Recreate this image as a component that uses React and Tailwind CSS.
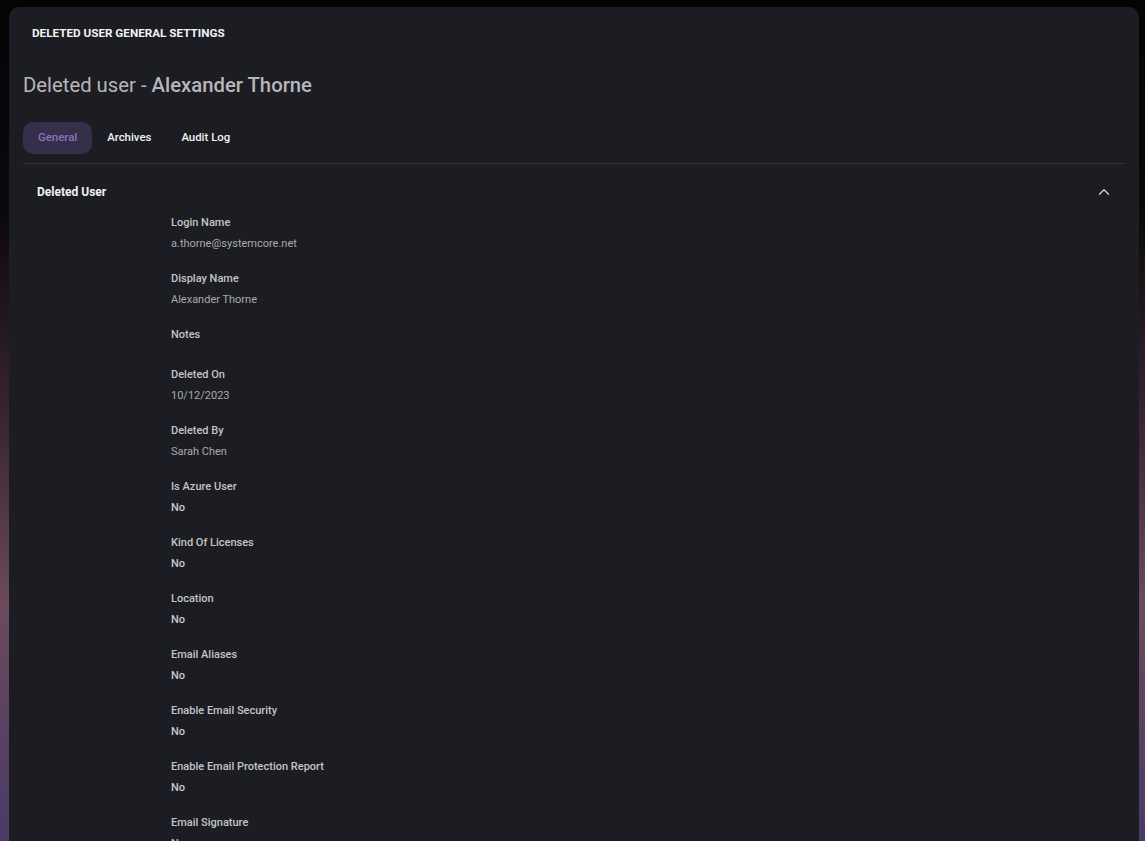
import { ChevronUp } from "lucide-react";

const fields = [
  { label: "Login Name", value: "a.thorne@systemcore.net" },
  { label: "Display Name", value: "Alexander Thorne" },
  { label: "Notes", value: "" },
  { label: "Deleted On", value: "10/12/2023" },
  { label: "Deleted By", value: "Sarah Chen" },
  { label: "Is Azure User", value: "No", strong: true },
  { label: "Kind Of Licenses", value: "No", strong: true },
  { label: "Location", value: "No", strong: true },
  { label: "Email Aliases", value: "No", strong: true },
  { label: "Enable Email Security", value: "No", strong: true },
  { label: "Enable Email Protection Report", value: "No", strong: true },
  { label: "Email Signature", value: "No", strong: true },
];

function Field({ label, value, strong }) {
  return (
    <div className="flex flex-col pb-[19px]">
      <div className="h-4 leading-4 text-[11px] font-medium text-[#c4c4c8]">{label}</div>
      <div
        className={`mt-[5px] leading-4 text-[11px] ${
          strong ? "h-4 font-medium text-[#c8c8cc]" : value ? "h-4 text-[#a9a9ae]" : ""
        }`}
      >
        {value}
      </div>
    </div>
  );
}

export default function App() {
  const tabs = ["General", "Archives", "Audit Log"];
  return (
    <div
      className="h-[841px] overflow-hidden pl-[9px] pr-[6px] pt-[7px] bg-[linear-gradient(180deg,#040405_0%,#0b080b_25%,#3a2531_50%,#6b4a5c_72%,#4a3a68_100%)]"
      style={{ fontFamily: "Roboto, 'Liberation Sans', sans-serif" }}
    >
      <div className="h-[900px] w-[1130px] rounded-t-[10px] bg-[#1c1d22] px-[14px]">
        <div className="pt-[18px] pl-[9px] h-[39px] leading-4 text-[11.7px] font-bold text-[#f2f2f4]">
          DELETED USER GENERAL SETTINGS
        </div>
        <h1 className="mt-[25px] h-[28px] leading-[28px] text-[20.3px] text-[#b7b7bb]">
          Deleted user - <span className="font-medium">Alexander Thorne</span>
        </h1>
        <div className="mt-[23px] flex items-center">
          {tabs.map((t, i) => (
            <button
              key={t}
              className={`h-[32px] rounded-[10px] px-[15px] text-[11.4px] font-medium ${
                i === 0 ? "bg-[#362f49] text-[#8f73bd]" : "text-[#f1f1f3]"
              }`}
            >
              {t}
            </button>
          ))}
        </div>
        <div className="mt-[9px] h-px w-[1102px] bg-[#2f3036]" />
        <div className="flex h-[51px] w-[1102px] items-start justify-between pl-[14px] pr-[12px] pt-[20px]">
          <span className="leading-4 text-[12px] font-bold text-[#f2f2f4]">Deleted User</span>
          <ChevronUp className="h-[18px] w-[18px] -mt-[1px] text-[#d8d8dc]" strokeWidth={1.6} />
        </div>
        <div className="pl-[148px]">
          {fields.map((f) => (
            <Field key={f.label} {...f} />
          ))}
        </div>
      </div>
    </div>
  );
}
